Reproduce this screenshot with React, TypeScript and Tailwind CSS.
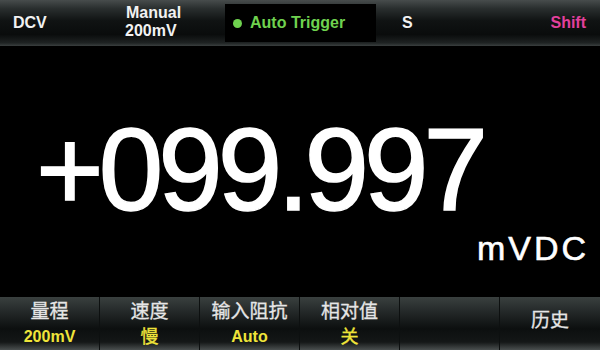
import React from "react";

const sans = { fontFamily: '"Liberation Sans", Arial, sans-serif' };
const cjk = { fontFamily: '"Liberation Sans", "Noto Sans CJK SC", sans-serif' };

function Col({ label, value, cjkValue, last }: { label: string; value?: string; cjkValue?: boolean; last?: boolean }) {
  return (
    <div className={`flex flex-col items-center pt-[5px] ${last ? "" : "border-r border-[#0d1010]"}`}>
      <div className="text-[19px] leading-[19px] text-[#e6e6e6] [-webkit-text-stroke:0.3px_#e6e6e6]" style={cjk}>{label}</div>
      {value && (
        <div
          className={`mt-[8px] h-[16px] leading-[16px] font-bold text-[#efe43a] ${cjkValue ? "text-[18px] font-normal [-webkit-text-stroke:0.4px_#efe43a]" : "text-[16px]"}`}
          style={cjk}
        >
          {value}
        </div>
      )}
    </div>
  );
}

export default function App() {
  return (
    <div className="w-[600px] h-[350px] bg-black flex flex-col overflow-hidden" style={sans}>
      <div className="h-[46px] flex items-center bg-[linear-gradient(to_bottom,#474c4c_0%,#2a2f2f_18%,#101313_45%,#0a0c0c_75%,#1e2222_93%,#3a3f3f_100%)]">
        <div className="w-[126px] pl-[13px] text-[16px] font-bold text-[#f2f2f2] leading-none">DCV</div>
        <div className="w-[99px] flex flex-col text-[16px] font-bold text-[#f2f2f2] leading-[18px] -mt-[3px]">
          <span>Manual</span>
          <span className="-ml-[1px]">200mV</span>
        </div>
        <div className="w-[151px] h-[38px] bg-black flex items-center pl-[8px] gap-[8px]">
          <span className="w-[9px] h-[9px] rounded-full bg-[#6fd24f]" />
          <span className="text-[16px] font-bold text-[#6fd24f] leading-none">Auto Trigger</span>
        </div>
        <div className="ml-[26px] text-[16px] font-bold text-[#f2f2f2] leading-none">S</div>
        <div className="ml-auto mr-[14px] text-[16px] font-bold text-[#e2409c] leading-none">Shift</div>
      </div>

      <div className="flex-1 flex flex-col pt-[66px]">
        <div className="pl-[36px] text-[116px] leading-none text-white tracking-[-5px] [-webkit-text-stroke:1.5px_white]">+099.997</div>
        <div className="self-end mr-[11px] mt-[3px] text-[34px] leading-none text-white tracking-[3px] [-webkit-text-stroke:0.6px_white]">mVDC</div>
      </div>

      <div className="h-[53px] grid grid-cols-6 bg-[linear-gradient(to_bottom,#3a403f_0%,#262b2b_25%,#0c0f0f_60%,#141717_85%,#4a4f4f_100%)]">
        <Col label="量程" value="200mV" />
        <Col label="速度" value="慢" cjkValue />
        <Col label="输入阻抗" value="Auto" />
        <Col label="相对值" value="关" cjkValue />
        <Col label="" />
        <div className="flex items-center justify-center pb-[6px]">
          <div className="text-[19px] leading-[19px] text-[#e6e6e6] [-webkit-text-stroke:0.3px_#e6e6e6]" style={cjk}>历史</div>
        </div>
      </div>
    </div>
  );
}
